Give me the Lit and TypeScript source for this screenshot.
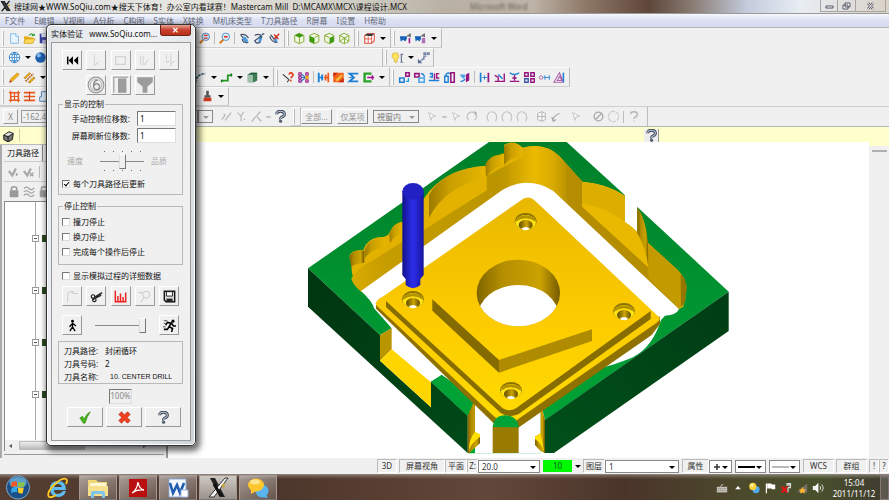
import { LitElement, html, css, svg, nothing } from "lit";
import { customElement, property } from "lit/decorators.js";

const glyphs: Record<string, unknown> = {
  app: svg`<path d="M2 2l3 0 6 10h-3zM11 1L7 6M6 8L2 13" stroke="#222" stroke-width="1.6" fill="#444"/><path d="M9 5l3 1-2 2z" fill="#c9a227"/>`,
  page: svg`<path d="M3 2h6l3 3v8H3z" fill="#e6f4ff" stroke="#7fb4dc"/><path d="M9 2v3h3" fill="#fff" stroke="#7fb4dc"/>`,
  open: svg`<path d="M1 5h5l1 1h5v7H2z" fill="#e8b320"/><path d="M3 8h11l-3 5H1z" fill="#ffd95a" stroke="#c08a00" stroke-width=".6"/><path d="M7 4q3-4 5 0M10 4h3V2" fill="none" stroke="#2f9e2f" stroke-width="1.4"/>`,
  save: svg`<path d="M2 2h11v11H2z" fill="#3a3f9c"/><path d="M4 2h7v4H4z" fill="#dfe6f5"/><path d="M5 9h5v4H5z" fill="#b8bde0"/>`,
  zoomFit: svg`<path d="M2 13l4-4" stroke="#d87a1d" stroke-width="2.4"/><circle cx="9" cy="5.500" r="4.300" fill="#bfe3f7" stroke="#4a77a8"/><path d="M7 4h4M7 7h4" stroke="#e02818" stroke-width="1.500"/>`,
  zoomOut: svg`<path d="M2 13l4-4" stroke="#d87a1d" stroke-width="2.4"/><circle cx="9" cy="5.500" r="4.300" fill="#d6ecf9" stroke="#4a88c0"/><path d="M7 5.500h4" stroke="#e02818" stroke-width="1.800"/>`,
  spin: svg`<path d="M3 3l7 9M3 3q6-1 9 4M5 8q0 5 7 4" stroke="#43536b" stroke-width="1.500" fill="none"/><path d="M8 5l4 5-3 2-4-4z" fill="#4b9be0"/>`,
  turn: svg`<path d="M2 4q5-3 8 1l-2 7q-5 2-6-2l7-5M10 3l3-1" stroke="#43536b" stroke-width="1.500" fill="none"/><path d="M7 7l4-1-2 5-3 1z" fill="#4b9be0"/>`,
  unspin: svg`<path d="M3 3l7 9M2 5q2 7 9 7" stroke="#43536b" stroke-width="1.500" fill="none"/><path d="M7 8l3-1 1 5-3-1z" fill="#4b9be0"/><path d="M7 3l5 5M13 2L7 8" stroke="#d42a1c" stroke-width="1.600"/>`,
  cubeTop: svg`<path d="M2 4l5-2.500L12.500 4v7L7.500 13.500 2 11z" fill="#f3f8e4" stroke="#79a51d"/><path d="M2 4l5-2.500L12.500 4 7.500 6.500z" fill="#3f9a13"/><path d="M7.500 6v7" stroke="#79a51d"/>`,
  cubeFront: svg`<path d="M2 4l5-2.500L12.500 4v7L7.500 13.500 2 11z" fill="#f3f8e4" stroke="#79a51d"/><path d="M2 4.500l5.500 2.500v6.500L2 11z" fill="#3f9a13"/><path d="M7.500 6.500l5-2.500" stroke="#79a51d"/>`,
  cubeSide: svg`<path d="M2 4l5-2.500L12.500 4v7L7.500 13.500 2 11z" fill="#f3f8e4" stroke="#79a51d"/><path d="M12.500 4.500L7.500 7v6.500l5-2.500z" fill="#3f9a13"/><path d="M2 4l5.500 2.500" stroke="#79a51d"/>`,
  cubeIso: svg`<path d="M2 4l5-2.500L12.500 4v7L7.500 13.500 2 11zM2 4l5.500 3 5-3M7.500 7v6M2 11l5.500-4 5 4" fill="#f6faea" stroke="#79a51d"/>`,
  cubeRed: svg`<path d="M2 4l3-2h8v8l-3 3H2z" fill="#fff" stroke="#e04a3a" stroke-width="1.200"/><path d="M2 4l3-2h8l-3 3z" fill="#333"/><path d="M2 8h8M6 5v8M10 5v8" stroke="#e04a3a"/>`,
  vis: svg`<path d="M1 5h8v3L7 11 5 9l-3 2z" fill="#1660b8"/><path d="M9 5l4-3v4" stroke="#555" fill="#888"/><path d="M12 7v6" stroke="#a0148c" stroke-width="1.800"/>`,
  vis2: svg`<path d="M1 5h7v3L6 11 4 9l-2 2z" fill="#1660b8"/><path d="M8 5l4-3v4" stroke="#555" fill="#888"/><path d="M9 7h4v6H9z" fill="#b070b8"/>`,
  globe: svg`<circle cx="7.500" cy="7.500" r="6" fill="#eef7ff" stroke="#2b7cc4"/><path d="M1.500 7.500h12M7.500 1.500v12M3 4h9M3 11h9M7.500 1.500q-6 6 0 12q6-6 0-12" fill="none" stroke="#2b7cc4" stroke-width=".8"/>`,
  ball: svg`<circle cx="7.500" cy="7.500" r="6" fill="#1d5fae"/><circle cx="5.500" cy="5" r="2.500" fill="#7db7ee"/>`,
  bulb: svg`<path d="M5 2a4 4 0 014 4q0 2-2 4v3H4v-3Q1 8 1 6a4 4 0 014-4z" fill="#ffe15a" stroke="#c9a63a" stroke-width=".7"/><path d="M12 4v9M11 4h3M11 13h3" stroke="#6c7a92" stroke-width="1.400"/>`,
  jog: svg`<path d="M8 2h2v2H8zM12 2h2v2h-2zM11 6H8v4M3 13l5-5" fill="none" stroke="#6f7fa3" stroke-width="1.400"/><path d="M1 14V9l5 5z" fill="#5f6f93"/>`,
  pencil: svg`<path d="M2 13l1-4 8-7 2 2-8 8z" fill="#f0b31c" stroke="#b57908" stroke-width=".6"/><path d="M1.500 13.500l1-3 2 2z" fill="#a33"/>`,
  pencils: svg`<path d="M1 8l6-6 2 1-6 6zM6 13l6-6 2 1-6 6z" fill="#f0b31c" stroke="#a86c08" stroke-width=".7"/><path d="M3 12l9-9" stroke="#b3541a" stroke-width="1.800" stroke-dasharray="2 1"/>`,
  arc: svg`<path d="M2 13q0-9 11-10" fill="none" stroke="#24566e" stroke-width="1.800" stroke-dasharray="3 1"/>`,
  spline: svg`<path d="M2 11h7V5h5" fill="none" stroke="#23971f" stroke-width="2"/><path d="M1 10h2v3H1zM12 3h2v3h-2z" fill="#157a12"/>`,
  solid: svg`<path d="M2 4l4-2h7v9l-4 2H2z" fill="#3d7a55"/><path d="M2 4h6v9H2z" fill="#9fbfa9"/><path d="M2 4l4-2h7L9 4z" fill="#1f5a3a"/>`,
  ask: svg`<path d="M1 4l7 6-2 3" fill="none" stroke="#333" stroke-width="1.200"/><path d="M8 4q2-3 4-1t-2 5M10 10v2" fill="none" stroke="#e23c17" stroke-width="2"/>`,
  nodes: svg`<path d="M2 2h3v3H2zM2 6h3v3H2zM2 10h3v3H2zM10 2h3v3h-3zM10 10h3v3h-3z" fill="#d58ac8" stroke="#96147e"/><path d="M5 3.500l5 4M5 11.500l5-4M5 7.500h5" stroke="#2e76c8" stroke-width="1.300"/><path d="M9.500 5.500h4v4h-4z" fill="#f0a51e"/>`,
  join: svg`<path d="M2 2v11M6 4v7" stroke="#1c7fd6" stroke-width="2.200"/><path d="M2 7.500h5" stroke="#1c7fd6" stroke-width="2"/><path d="M8 7.500h5M13 2v11M10 4v7" stroke="#f0571a" stroke-width="2"/>`,
  brush: svg`<path d="M1.500 2h12v11h-12z" fill="#f0631a"/><path d="M1.500 2h5l-5 5zM13.500 8v5h-6z" fill="#c62812"/><path d="M4 10l7-6 1 2-6 6z" fill="#ffc23c"/>`,
  sigma: svg`<path d="M13 3H3l5 4.500L3 12h10" fill="none" stroke="#1c7fd6" stroke-width="2.200"/><path d="M2 7.500h5" stroke="#1c7fd6"/>`,
  magnet: svg`<path d="M11 3H3v9h8" fill="none" stroke="#29a329" stroke-width="2.800"/><path d="M6 7.500h8M12 5v5" stroke="#a2148c" stroke-width="1.800"/>`,
  x1: svg`<path d="M2 8h5v5H2z" fill="none" stroke="#1c7fd6" stroke-width="1.800"/><path d="M9 2h4v4H9z" fill="none" stroke="#96147e" stroke-width="1.800"/><path d="M9 12h3V8" fill="none" stroke="#1c9fe6" stroke-width="1.500"/>`,
  x2: svg`<path d="M2 3h5v4H2z" fill="none" stroke="#96147e" stroke-width="1.800"/><path d="M7 8h6v5H7z" fill="none" stroke="#4ba4e6" stroke-width="1.800"/><path d="M9 3q4 0 4 4" fill="none" stroke="#1c7fd6" stroke-width="1.500"/>`,
  x3: svg`<path d="M2 3h3v4H2M1 11h12" fill="none" stroke="#1c7fd6" stroke-width="1.800"/><path d="M13 3h-3v5h3M7.500 3v7" fill="none" stroke="#96147e" stroke-width="1.600"/>`,
  x4: svg`<path d="M2 6h4v7H2zM3 5q2-4 5-2" fill="none" stroke="#1c7fd6" stroke-width="1.600"/><path d="M9 2h4v11H9z" fill="none" stroke="#96147e" stroke-width="1.800"/>`,
  x5: svg`<path d="M2 4h6v3L6 9 4 7z" fill="#4ba4e6"/><path d="M9 4l4-2v9l-4 2z" fill="#96147e"/><path d="M3 12q4 0 5-3" fill="none" stroke="#1c7fd6" stroke-width="1.400"/>`,
  d1: svg`<path d="M3 2v11" stroke="#1c7fd6" stroke-width="2"/><path d="M12 2v11" stroke="#96147e" stroke-width="2"/><path d="M5 7.500h6M7.500 5v5" stroke="#1c7fd6"/>`,
  d2: svg`<path d="M2 5l4 2v5M2 12h11V3" fill="none" stroke="#96147e" stroke-width="1.600"/><path d="M6 4l5 5" stroke="#1c7fd6" stroke-width="1.600"/>`,
  d3: svg`<path d="M2 2q5 4 11 0" fill="none" stroke="#1c7fd6" stroke-width="1.600"/><path d="M2 12h11M7.500 5v6M5 8h5" stroke="#96147e" stroke-width="1.600"/>`,
  d4: svg`<path d="M2 2h4v4H2zM9 2h4v4H9zM9 9h4v4H9z" fill="none" stroke="#96147e" stroke-width="1.600"/><path d="M2 9h4v4H2z" fill="none" stroke="#3d58a8" stroke-width="1.600"/>`,
  d5: svg`<circle cx="3.500" cy="7.500" r="2" fill="none" stroke="#b060a8"/><path d="M6 7.500h8M8 5v5M13 5v5" stroke="#3c90d8" stroke-width="1.200"/>`,
  d6: svg`<path d="M1 13L7.500 2 12 13zM5 11l3-5 2 5z" fill="none" stroke="#b060a8" stroke-width="1.200"/><path d="M12 2v11" stroke="#1c7fd6" stroke-width="1.800"/>`,
  gridRed: svg`<path d="M3 3h9v9H3z" fill="none" stroke="#e04818" stroke-width="1.600"/><path d="M3 1v13M12 1v13M1 3h13M1 12h13M7.500 3v9M3 7.500h9" stroke="#e8581c" stroke-width="1.400"/>`,
  rows: svg`<path d="M1 3h13M1 7.500h13M1 12h13" stroke="#e8581c" stroke-width="2"/><path d="M7.500 2v11" stroke="#d63a10" stroke-width="1.200"/>`,
  doc: svg`<path d="M4 2h9v11H2V8h2z" fill="#dfeefa" stroke="#4272a5"/>`,
  stamp: svg`<path d="M6 1h3v5h2v3H4V6h2z" fill="#555"/><path d="M3 9h9v4H3z" fill="#d1371c"/>`,
  pick: svg`<path d="M3 3l8 4-4 1-1 4z" fill="#fafafa" stroke="#c0c0c0"/>`,
  lines: svg`<path d="M2 11l4-5M6 12l4-6M9 8l4-5M4 5h2" stroke="#b5b5b5" stroke-width="1.300"/>`,
  why: svg`<path d="M3 3l4 4 3-5M7 7v6M10 11h2" stroke="#b8b8b8" fill="none" stroke-width="1.300"/>`,
  slash: svg`<path d="M2 13L12 2M8 8l5 5" stroke="#b0b0b0" fill="none" stroke-width="1.300"/>`,
  dash: svg`<path d="M5 8h5" stroke="#b0b0b0" stroke-width="1.600"/>`,
  loop: svg`<path d="M4 12Q1 7 4 4t8 0q3 4-1 8" fill="none" stroke="#c4c4c4" stroke-width="1.400"/><path d="M10 2l3 1-1 3" fill="none" stroke="#999"/>`,
  arch: svg`<path d="M4 13Q1 8 4 4t8 0q3 4 0 9" fill="none" stroke="#c4c4c4" stroke-width="1.400"/>`,
  box: svg`<path d="M3 4l5-2 4 2v7l-4 2-5-2zM8 2v11M3 7.500h9" fill="#f6f6f6" stroke="#b0b0b0"/>`,
  check: svg`<path d="M3 12Q5 6 11 4" fill="none" stroke="#b5b5b5" stroke-width="1.500"/><path d="M2 8l2 5 3-2" fill="none" stroke="#aaa" stroke-width="1.500"/>`,
  ban: svg`<circle cx="7.500" cy="7.500" r="5" fill="none" stroke="#aaa" stroke-width="1.600"/><path d="M4 11l7-7" stroke="#aaa" stroke-width="1.600"/>`,
  ring: svg`<circle cx="7.500" cy="7.500" r="6" fill="none" stroke="#ccc" stroke-width="1.400" stroke-dasharray="5 1"/>`,
  helpDim: svg`<path d="M4 5q0-3 4-3t4 3-4 4v1M8 12v1" fill="none" stroke="#b5b5b5" stroke-width="1.600"/>`,
  help: svg`<path d="M3 5q0-3.500 4.500-3.500T12 5q0 2-2.500 3T8 10.500" fill="none" stroke="#3c4658" stroke-width="3.400"/><path d="M3 5q0-3.500 4.500-3.500T12 5q0 2-2.500 3T8 10.500" fill="none" stroke="#b9c3d3" stroke-width="1.300"/><circle cx="7.600" cy="13" r="1.500" fill="#59647a" stroke="#2c3444" stroke-width=".6"/>`,
  block: svg`<path d="M2 6l6-4 5 2-1 7-5 3-5-3z" fill="#777" stroke="#111"/><path d="M2 6l5 2 6-4M7 8v6" fill="none" stroke="#111"/><path d="M3 5.500L8 3l4 1-5 3z" fill="#ddd"/>`,
  tick: svg`<path d="M1 7l4 5 4-8" fill="none" stroke="#a8a8a8" stroke-width="2.600"/><path d="M9 9l3 2-3 2z" fill="#a0a0a0"/>`,
  tickx: svg`<path d="M1 7l4 5 4-8" fill="none" stroke="#a8a8a8" stroke-width="2.600"/><path d="M8 9l4 4M12 9l-4 4" stroke="#a0a0a0" stroke-width="1.400"/>`,
  lock: svg`<rect x="2" y="6" width="10" height="8" rx="1" fill="#9a9a9a"/><path d="M4 7V4q0-2 3-2t3 2v3" fill="none" stroke="#9a9a9a" stroke-width="1.800"/>`,
  waves: svg`<path d="M1 4q3-3 6 0t6-1M1 8q3-3 6 0t6-1M1 12q3-3 6 0t6-1" fill="none" stroke="#a0a0a0" stroke-width="1.400"/>`,
  rewind: svg`<path d="M2 3v9" stroke="#000" stroke-width="1.800"/><path d="M8 2.500v10L3 7.500zM14 2.500v10L9 7.500z"/>`,
  play: svg`<path d="M5 1v13" stroke="#ccc"/><path d="M6 13l4-4" stroke="#bbb"/>`,
  stop: svg`<path d="M2 3h11v9H2z" fill="none" stroke="#d2d2d2" stroke-width="1.500"/>`,
  step: svg`<path d="M3 2v11M6 2v11" stroke="#ccc"/><path d="M7 13l5-7" stroke="#ccc"/>`,
  fast: svg`<path d="M4 1v9M9 1v13" stroke="#ccc"/><path d="M5 10l2-2M10 11l3-3" stroke="#bbb"/>`,
  coil: svg`<circle cx="7.500" cy="7.500" r="6.500" fill="none" stroke="#999"/><circle cx="7.500" cy="7.500" r="4.800" fill="none" stroke="#aaa" stroke-width=".7"/><path d="M9 3.500q-3.500 0-3.500 4.500 0 3.500 2.500 3.500t2.500-2.500-2.500-2.500-2 2" fill="none" stroke="#909090" stroke-width="1.200"/>`,
  mill: svg`<path d="M1.500 14V1h12" fill="none" stroke="#a0a0a0"/><path d="M5 2h7v12H5z" fill="#9c9c9c"/>`,
  funnel: svg`<path d="M1 1h13v4L9.500 9v5h-4V9L1 5z" fill="#9c9c9c"/>`,
  folder: svg`<path d="M2 4v10M2 4l3-2h3v2h6M6 2h3" fill="none" stroke="#c4c4c4"/>`,
  cut: svg`<path d="M14 3L6 8M13 6L3 11" stroke="#222" stroke-width="1.600"/><circle cx="3.500" cy="7.500" r="2" fill="none" stroke="#222" stroke-width="1.400"/><circle cx="5" cy="11.500" r="2" fill="none" stroke="#222" stroke-width="1.400"/>`,
  chart: svg`<path d="M1.500 1v12.500h12V3M4.500 7v6M7.500 4v9M10.500 8v5" fill="none" stroke="#ee2020" stroke-width="1.700"/>`,
  lens: svg`<circle cx="9.500" cy="5.500" r="4" fill="none" stroke="#c4c4c4"/><path d="M7 9l-4 5M1 3h4" stroke="#bbb"/>`,
  disk: svg`<path d="M1.500 1.500h12v12h-10l-2-2z" fill="#d8d8d8" stroke="#111" stroke-width="1.600"/><path d="M4 2h7v5H4z" fill="#fff" stroke="#111"/><path d="M4 10h7v4H4z" fill="#222"/>`,
  walk: svg`<circle cx="7.500" cy="2.500" r="1.600"/><path d="M7.500 4v5l-3 5M7.500 9l3 5M7.500 5L4 9M7.500 5l4 3" fill="none" stroke="#000" stroke-width="1.500"/>`,
  run: svg`<circle cx="11.500" cy="2.500" r="1.800"/><path d="M10 4L7 9l4 2-1 4M7 9l-2 3H1M10 5L5 4 3 7M10 5l2 3h3" fill="none" stroke="#000" stroke-width="1.800"/><path d="M1 2h4M0 9h3M1 5h2" stroke="#333"/>`,
  ok: svg`<path d="M1 8l3-2 2 3q3-6 7-8-4 6-6 13H5z" fill="#48b81c" stroke="#2c7f0e" stroke-width=".7"/>`,
  cancel: svg`<path d="M1 4l3-3 3.500 3.500L11 1l3 3-3.500 3.500L14 11l-3 3-3.500-3.500L4 14l-3-3 3.500-3.500z" fill="#f4401c" stroke="#a81f08" stroke-width=".8"/>`,
  // tray
  kbd: svg`<path d="M1 6h13v7H1z" fill="#c9c4c0"/><path d="M2 8h11M2 10.500h11" stroke="#776" stroke-dasharray="1.500 1"/><path d="M6 6q0-3 3-3" fill="none" stroke="#ddd"/>`,
  up: svg`<path d="M4 9l3.500-4L11 9z" fill="#fff"/>`,
  chat: svg`<circle cx="10" cy="9.500" r="4.500" fill="#4fa9ea"/><circle cx="6" cy="5.500" r="4.500" fill="#ffcf3a"/><circle cx="5" cy="4" r="2" fill="#fff0a8"/>`,
  flag: svg`<path d="M3 2v12" stroke="#fff" stroke-width="1.500"/><path d="M4 2h5l1 1h4v6h-4L9 8H4z" fill="#fff"/>`,
  plug: svg`<path d="M8 2h5v5h-3v6M8 4h6" fill="none" stroke="#ddd" stroke-width="1.500"/><path d="M2 6l7 7M9 6l-7 7" stroke="#e31515" stroke-width="2.600"/>`,
  bars: svg`<path d="M1 13L14 2v11z" fill="#77706c"/><path d="M8 6l1.500 3 3 .5-2 2 .5 3-3-1.500-3 1.500.500-3-2-2 3-.5z" fill="#ffb52c"/>`,
  sound: svg`<path d="M1 5h3l4-4v13l-4-4H1z" fill="#f4f4f4"/><path d="M10 5q2 2.500 0 5M12 3q4 4.500 0 9" fill="none" stroke="#ddd" stroke-width="1.200"/>`,
};

@customElement("tool-icon")
class ToolIcon extends LitElement {
  @property() name = "";
  static styles = css`
    :host { display: inline-flex; width: 13px; height: 13px; flex: none; }
    svg { width: 100%; height: 100%; display: block; }
  `;
  render() {
    return html`<svg viewBox="0 0 15 15" aria-hidden="true">${glyphs[this.name] ?? nothing}</svg>`;
  }
}

@customElement("part-view")
class PartView extends LitElement {
  static styles = css`
    :host { display: block; }
    svg { display: block; width: 100%; height: 316px; }
  `;
  hole(x: number, y: number) {
    return svg`<g transform="translate(${x} ${y})">
      <ellipse rx="33" ry="25" fill="#8a7000"/>
      <ellipse cy="3" rx="31" ry="22" fill="#ffe413"/>
      <path d="M-31 2a31 20 0 0162 0q-31-22-62 0z" fill="#b39200"/>
      <ellipse cy="11" rx="21" ry="15" fill="url(#bore)"/>
      <path d="M-13 22q13-10 26 0-13 9-26 0z" fill="#fff"/>
    </g>`;
  }
  render() {
    return html`<svg viewBox="168 142 701 316" preserveAspectRatio="xMidYMin meet" role="img" aria-label="Mastercam">
      <defs>
        <linearGradient id="top" x1="0" y1="0" x2="0" y2="1"><stop offset="0" stop-color="#007f2a"/><stop offset="1" stop-color="#00a838"/></linearGradient>
        <linearGradient id="left" x1="0" y1="0" x2="1" y2="1"><stop offset="0" stop-color="#003510"/><stop offset="1" stop-color="#004a18"/></linearGradient>
        <linearGradient id="right" x1="1" y1="0" x2="0" y2="1"><stop offset="0" stop-color="#003d14"/><stop offset="1" stop-color="#00501a"/></linearGradient>
        <linearGradient id="plate" x1="0" y1="0" x2="0" y2="1"><stop offset="0" stop-color="#e8b800"/><stop offset=".5" stop-color="#fcca00"/><stop offset="1" stop-color="#ffdb00"/></linearGradient>
        <linearGradient id="strip" x1="0" y1="0" x2="1" y2="0"><stop offset="0" stop-color="#d9ac00"/><stop offset=".2" stop-color="#c69d00"/><stop offset=".85" stop-color="#bb9500"/><stop offset="1" stop-color="#c9a000"/></linearGradient>
        <linearGradient id="curve" x1="0" y1="0" x2="1" y2="0"><stop offset="0" stop-color="#9c7a00"/><stop offset=".35" stop-color="#c99e00"/><stop offset="1" stop-color="#e6b600"/></linearGradient>
        <linearGradient id="corner" x1="0" y1="0" x2="1" y2="0"><stop offset="0" stop-color="#c69d00"/><stop offset=".35" stop-color="#ebba00"/><stop offset=".6" stop-color="#d9ab00"/><stop offset=".85" stop-color="#b08b00"/><stop offset="1" stop-color="#b08b00"/></linearGradient>
        <linearGradient id="round" x1="0" y1="0" x2="1" y2="0"><stop offset="0" stop-color="#7d6200"/><stop offset=".3" stop-color="#b28d00"/><stop offset=".75" stop-color="#cca200"/><stop offset="1" stop-color="#6d5500"/></linearGradient>
        <linearGradient id="bore" x1="0" y1="0" x2="1" y2="0"><stop offset="0" stop-color="#5b4900"/><stop offset=".55" stop-color="#cda500"/><stop offset="1" stop-color="#5b4900"/></linearGradient>
        <linearGradient id="tool" x1="0" y1="0" x2="1" y2="0"><stop offset="0" stop-color="#12128c"/><stop offset=".5" stop-color="#2e2eec"/><stop offset="1" stop-color="#15159c"/></linearGradient>
        <clipPath id="bigHole"><ellipse cx="655" cy="474" rx="125" ry="100"/></clipPath>
      </defs>
      <g transform="translate(300 135) scale(.33333)">
        <path d="M24 400L567 21H800L975 181V300H1012V216L1286 470 735 856 722 803V955H503V842L393 740 275 580 240 600z" fill="url(#top)"/>
        <path d="M24 400L240 600V677L393 817V740L503 842V954L24 515z" fill="url(#left)"/>
        <path d="M1286 470V588L762 954H733L735 855z" fill="url(#right)"/>
        <path d="M148 365Q150 345 190 345 200 313 235 307 265 307 270 290 280 265 307 260L372 190Q430 100 560 92 560 70 612 55L612 30Q640 12 668 38 735 20 780 65L847 140Q920 145 975 183V260L1012 294V216L1045 325 1130 402Q1170 440 1155 480L1150 515 1137 522 760 180Q690 140 607 175L183 468Q155 445 154 390z" fill="#e3b200"/>
        <path d="M387 248V180Q430 100 560 93V130Q440 150 387 248z" fill="url(#curve)"/>
        <path d="M148 365Q160 340 193 348V383Q165 385 154 395z" fill="url(#round)"/>
        <path d="M193 348Q205 305 255 310V335Q215 340 195 370z" fill="url(#curve)"/>
        <path d="M268 300Q275 266 307 260V298Q285 298 270 325z" fill="url(#curve)"/>
        <path d="M154 430Q175 395 215 378L305 322 375 283 560 166V122L640 80H672V160L607 175 183 470Q158 450 154 430z" fill="url(#strip)"/>
        <path d="M625 90L640 80Q670 70 668 38 735 20 780 65L847 140V250L760 190H625z" fill="url(#corner)"/>
        <path d="M556 87Q575 55 612 60V90Q580 98 558 125z" fill="url(#curve)"/>
        <path d="M612 34Q640 12 668 38V68Q635 62 612 90z" fill="url(#curve)"/>
        <path d="M800 88L847 140V215L1045 395 1145 500 1137 522 800 215z" fill="#b48e00"/>
        <path d="M847 140Q930 150 975 183V262Q1045 300 1045 397L847 215z" fill="#e6b500"/>
        <path d="M847 143Q920 145 975 183V258L910 225 847 215z" fill="#dcae00"/>
        <path d="M847 215L847 206Q920 215 975 262 1045 315 1045 397z" fill="#e9b800"/>
        <path d="M1012 216Q1050 270 1045 397 1038 340 1012 294z" fill="url(#round)"/>
        <path d="M1045 325L1130 402Q1168 440 1156 480 1160 505 1137 520L1045 430z" fill="#c39a00"/>
        <path d="M1142 416Q1168 440 1156 480 1158 505 1143 515z" fill="#967600"/>
        <path d="M183 468L607 165Q685 120 760 168L1137 522Q1130 540 1095 542L1083 555Q1058 635 1000 666 955 687 860 710L845 724 800 745 790 765 760 785 722 805 722 955H525V790L425 720 393 740 275 640V580L240 540 222 520Q218 500 183 468z" fill="#fff"/>
        <path d="M240 600L275 580V643L240 677z" fill="#b99600"/>
        <path d="M240 677L275 643 393 742V817z" fill="#ffd500"/>
        <path d="M393 740L425 720 525 790 503 842z" fill="#00a236"/>
        <path d="M503 842L525 792V895L540 905V925L508 954H503z" fill="url(#round)"/>
        <path d="M525 890L540 898V906Q510 925 507 950 505 915 525 890z" fill="#ffe000"/>
        <path d="M722 803L735 856V954Q720 950 705 930V905L722 895z" fill="url(#round)"/>
        <path d="M705 905L722 895 733 954Q725 925 705 912z" fill="#ffe000"/>
        <path d="M228 505L240 490 1080 545V567L1055 600 655 878 620 885 578 862 228 521z" fill="#8e7100"/>
        <path d="M228 503Q230 495 250 484L660 198Q685 178 705 197L1076 545Q1085 552 1070 563L655 852Q620 880 580 842L228 510z" fill="url(#plate)"/>
        <path d="M258 498L608 820Q628 832 648 820L1052 528V552L655 838Q625 850 602 834L258 516z" fill="#876c00"/>
        <path d="M397 493V527L597 713V675z" fill="#856a00"/>
        <path d="M597 675L876 583V618L597 713z" fill="#ae8b00"/>
        <g clip-path="url(#bigHole)">
          <rect x="525" y="370" width="260" height="210" fill="url(#round)"/>
          <ellipse cx="655" cy="548" rx="123" ry="98" fill="#fff"/>
        </g>
        ${this.hole(339, 493)}${this.hole(677, 259)}${this.hole(972, 529)}${this.hole(633, 766)}
        <path d="M578 876H656V954H578z" fill="#987b00"/>
        <path d="M578 876Q582 840 617 841 652 842 656 877z" fill="#00a338"/>
        <path d="M307 169H371V420L361 432V450Q339 470 317 450V432L307 420z" fill="url(#tool)"/>
        <ellipse cx="339" cy="169" rx="32" ry="25" fill="#2222c4"/>
      </g>
    </svg>`;
  }
}

const ic = (n: string) => html`<button class=${n === "dash" ? "tb slim" : "tb"} aria-label=${n}><tool-icon name=${n}></tool-icon></button>`;
const sep = html`<i class="sep"></i>`;
const dd = html`<button class="dd" aria-label="▾"></button>`;
const push = (n: string, label = n) => html`<button class="pb" aria-label=${label}><tool-icon name=${n}></tool-icon></button>`;
const list = (s: string) => s.split(" ").map((n) => (n === "|" ? sep : n === "v" ? dd : ic(n)));

@customElement("app-root")
class AppRoot extends LitElement {
  static styles = css`
    :host {
      display: flex; flex-direction: column; min-height: 100vh; position: relative; overflow: hidden;
      background: #f0f0f0; color: #111;
      font: 8px/12px "Noto Sans", "Noto Sans CJK SC", sans-serif;
    }
    * { box-sizing: border-box; }
    button, input, select { font: inherit; color: inherit; margin: 0; padding: 0; border-radius: 0; }
    button { display: inline-flex; align-items: center; justify-content: center; border: 0; background: none; }
    a { color: inherit; text-decoration: none; }

    .title {
      height: 14px; display: flex; align-items: center; padding-left: 0; gap: 1px; flex: none;
      background: linear-gradient(90deg, #d9dcdf 0, #e8e6e0 20%, #cfcdc4 40%, #b9b1a4 50%, #bdb3a6 60%, #8d7767 66%, #5e473a 73%, #8a7d74 78%, #c3cbdc 84%, #e8edf3 90%, #d9d2c8);
      border-bottom: 1px solid #9a9a9a; white-space: pre;
    }
    .ghost { margin-left: 62px; color: #6b665c; filter: blur(1px); }
    .win { margin-left: auto; display: flex; align-self: flex-start; margin-right: 3px; }
    .win button { height: 12px; width: 18px; border: 1px solid #a9a49d; border-top: 0; border-left-width: 0; color: #445; }
    .win button:first-child { border-left-width: 1px; }
    .win button:last-child { width: 30px; }
    .win svg { width: 9px; height: 8px; }

    .menu {
      height: 14px; display: flex; gap: 9px; align-items: center; padding-left: 5px; flex: none; color: #666b7b;
      background: linear-gradient(#f7f8fd, #dde2f3 45%, #d5dbef); border-bottom: 1px solid #b4b4bc;
    }

    .bars { flex: none; border-bottom: 1px solid #b5b5b5; }
    .bar { display: flex; height: 20px; }
    .bar.short { height: 19px; }
    .grp { display: flex; align-items: center; padding-right: 2px; border-right: 1px solid #bdbdbd; border-bottom: 1px solid #cfcfcf; border-top: 1px solid #fafafa; }
    .grp::before { content: ""; width: 0; height: 15px; margin: 0 3px 0 2px; border-left: 1px solid #fff; border-right: 1px solid #b8b8b8; }
    .tb { width: 15px; height: 15px; flex: none; }
    .slim { width: 9px; }
    .dd { width: 11px; height: 15px; flex: none; }
    .dd::before { content: ""; border: 3px solid transparent; border-top-color: #000; border-bottom: 0; }
    .sep { width: 1px; height: 12px; margin: 0 2px; background: #bbb; flex: none; }
    .under { display: block; flex: none; }
    .u1 { width: 145px; } .u2 { width: 332px; } .u3 { width: 145px; } .u4 { width: 148px; }

    .coord { color: #888; border-top: 1px solid #cfcfcf; margin-right: auto; }
    .sq { width: 15px; height: 15px; border: 1px solid; border-color: #fff #999 #999 #fff; color: #888; }
    .num { width: 177px; height: 13px; margin-left: 3px; border: 1px solid #999; background: #f0f0f0; padding-left: 1px; color: #888; }
    .combo { display: inline-flex; position: relative; height: 13px; border: 1px solid #888; background: #fff; flex: none; }
    .combo select { appearance: none; border: 0; background: transparent; width: 100%; padding-left: 3px; outline: 0; line-height: 11px; }
    .combo::after { content: ""; position: absolute; right: 3px; top: 5px; border: 3px solid transparent; border-top-color: #000; border-bottom: 0; pointer-events: none; }
    .combo svg { position: absolute; left: 2px; top: 1px; height: 10px; width: 18px; pointer-events: none; }
    .dim { background: #f0f0f0; width: 46px; margin-right: 6px; color: #777; }
    .dim::after { border-top-color: #999; }
    .axis { width: 15px; }
    .txt { width: 31px; height: 15px; margin-right: 5px; border: 1px solid; border-color: #fff #888 #888 #fff; color: #999; }
    .gap3 { margin-left: 3px; }
    .gap5 { margin-left: 5px; }
    .last { border-right: 1px solid #bdbdbd; padding: 0 6px 0 2px; }

    .prompt { flex: none; height: 15px; background: #ffffcc; display: flex; align-items: flex-start; }
    .prompt .tb { margin: 2px 0 0 1px; }
    .prompt hr { width: 1px; height: 14px; margin: 2px 0 0 3px; border: 0; background: #d0d0a0; }
    .prompt .q { margin: 2px 0 0 624px; height: 13px; background: #eee; border-right: 1px solid #999; }

    .main { flex: 1; display: flex; min-height: 316px; }
    .side { width: 168px; flex: none; display: flex; flex-direction: column; border-right: 2px solid #999; border-left: 2px solid #aaa; padding: 0 2px 3px 2px; }
    .side > i { display: block; height: 3px; margin: 0 -4px; background: #ffffcc; border-bottom: 1px solid #bbb; }
    .tab { align-self: flex-start; height: 16px; width: 39px; border-right: 1px solid #888; }
    .tools { display: flex; height: 20px; align-items: center; border-top: 1px solid #ccc; padding-left: 3px; flex: none; }
    .tree { flex: 1; background: #fff; border: 1px solid #888; border-bottom: 0; display: flex; }
    .tree ul { list-style: none; margin: 0 0 0 30px; padding: 31px 0 0; border-left: 1px solid #aaa; display: flex; flex-direction: column; gap: 41px; }
    .tree li { display: flex; align-items: center; height: 11px; margin-left: -4px; }
    .pm { width: 7px; height: 7px; border: 1px solid #999; background: #fff; }
    .pm::before { content: ""; width: 3px; height: 1px; background: #555; }
    .tree li::after { content: ""; width: 7px; height: 7px; margin-left: 3px; background: #2c4a22; }
    .hs { height: 11px; display: flex; align-items: center; flex: none; border-left: 1px solid #888; }
    .hs::before { content: ""; margin: 0 7px 0 4px; border: 2px solid transparent; border-right: 3px solid #555; border-left: 0; }
    .hs b { width: 66px; height: 9px; background: linear-gradient(#eee, #bbb); border: 1px solid #bbb; }
    .hs::after { content: ""; margin-left: 58px; border: 2px solid transparent; border-left: 3px solid #555; border-right: 0; }
    .side::after { content: ""; border-bottom: 1px solid #999; height: 3px; }
    .view { flex: 1; background: #fff; min-width: 0; }
    .edge { width: 20px; flex: none; background: #f0f0f0; border-top: 4px solid #ffffcc; }
    .edge::before { content: ""; display: block; height: 4px; margin: 0 2px 0 3px; border-bottom: 2px solid #b0b0b0; }

    .status { flex: none; height: 16px; display: flex; align-items: center; justify-content: flex-end; overflow: hidden; color: #333; }
    .cell { height: 14px; border: 1px solid; border-color: #bbb #fff #fff #bbb; display: flex; align-items: center; justify-content: center; white-space: nowrap; flex: none; }
    .status .combo { margin-right: 3px; }
    .w9 { width: 10px; } .w11 { width: 11px; } .w20 { width: 20px; } .w21 { width: 22px; } .w31 { width: 31px; } .w46 { width: 46px; } .w27 { width: 27px; }
    .c62 { width: 62px; } .c74 { width: 74px; } .c23 { width: 23px; } .c31 { width: 31px; }
    .lime { width: 29px; background: #00f800; height: 12px; color: #062; }
    .mr { margin-right: 2px; }

    .task {
      flex: none; height: 26px; display: flex; align-items: stretch; color: #fff;
      background: linear-gradient(rgba(255,255,255,.25), rgba(255,255,255,0) 4px), linear-gradient(90deg, #553e31, #4b352a 30%, #5a4033 45%, #62483a 55%, #4a342a 70%, #4c4a2c 84%, #48502c 92%, #403a30);
      border-top: 1px solid #8d8078;
    }
    .orb { width: 35px; } .orb svg { width: 26px; height: 25px; }
    .ie { width: 44px; } .ie svg { width: 22px; height: 22px; }
    .app { width: 38px; margin-right: 2px; border: 1px solid #a49a93; border-bottom-color: #777; background: linear-gradient(150deg, rgba(255,255,255,.5), rgba(255,255,255,.15)); }
    .app.on { background: linear-gradient(#cfc9c4, #9a918b); }
    .app svg { width: 22px; height: 22px; }
    .tray { margin-left: auto; display: flex; align-items: center; gap: 3px; }
    .tray tool-icon { width: 12px; height: 12px; margin-right: 1px; }
    .clock { width: 48px; text-align: center; line-height: 11px; margin: 0 2px 0 2px; }
    .peek { width: 9px; border: 1px solid #877; background: rgba(255,255,255,.15); }

    .dlg {
      position: absolute; left: 46px; top: 24px; width: 150px; padding: 0 4px 4px; border: 1px solid #333; border-radius: 5px;
      background: linear-gradient(100deg, #dfe3e6, #f4f6f8 40%, #cdd4d8); box-shadow: 2px 3px 6px 2px rgba(0,0,0,.6), inset 0 0 0 1px #fff;
    }
    .dlg header { display: flex; height: 17px; align-items: center; white-space: pre; }
    .x { margin-left: auto; align-self: flex-start; width: 31px; height: 11px; color: #fff; border: 1px solid #6d2318; border-top: 0; border-radius: 0 0 3px 3px; background: linear-gradient(#e6a396, #c8402c 50%, #b93218); font-weight: bold; }
    .body { height: 399px; border: 1px solid #999; background: #f0f0f0; padding: 7px 7px 0 6px; display: flex; flex-direction: column; }
    .row { display: flex; align-items: center; flex: none; }
    .btns { padding: 0 4px; justify-content: space-between; }
    .pb { width: 20px; height: 20px; border: 1px solid; border-color: #fff #999 #999 #fff; background: #f0f0f0; flex: none; }
    .pb tool-icon { width: 13px; height: 13px; }
    .mid { padding: 0 28px; justify-content: space-between; margin: 5px 0 4px; }
    .mid .pb tool-icon { width: 18px; height: 18px; }
    fieldset { margin: 0; padding: 0 0 0 3px; border: 1px solid #b8b8b8; min-width: 0; flex: none; }
    legend { padding: 0 1px; line-height: 10px; margin-left: 1px; }
    .disp { height: 96px; padding-top: 1px; }
    .halt { height: 64px; margin-top: 6px; padding-top: 3px; }
    .field { height: 17px; justify-content: flex-end; gap: 7px; padding-right: 6px; }
    .field input { width: 39px; height: 15px; border: 1px solid; border-color: #777 #ddd #ddd #777; padding-left: 2px; background: #fff; }
    .speed { height: 32px; padding: 2px 0 0 5px; color: #aaa; }
    input[type="range"] { appearance: none; background: linear-gradient(#888, #888) center / 100% 1px no-repeat; height: 18px; outline: 0; }
    input[type="range"]::-webkit-slider-thumb { appearance: none; width: 7px; height: 15px; background: #f0f0f0; border: 1px solid; border-color: #fff #777 #777 #ddd; }
    .ticks { width: 44px; margin: 0 7px 0 17px; padding: 2px 0; background: repeating-linear-gradient(90deg, transparent 0 4px, #666 4px 5px, transparent 5px 9px) top / 100% 1px no-repeat, repeating-linear-gradient(90deg, transparent 0 4px, #666 4px 5px, transparent 5px 9px) bottom / 100% 1px no-repeat; display: flex; }
    .ticks input { width: 44px; height: 16px; }
    .chk { display: flex; align-items: center; gap: 3px; height: 15px; flex: none; }
    .chk input { appearance: none; width: 8px; height: 8px; border: 1px solid; border-color: #777 #ddd #ddd #777; background: #fff; display: grid; place-items: center; }
    .chk input:checked::before { content: ""; width: 5px; height: 3px; border: solid #000; border-width: 0 0 1px 1px; transform: rotate(-50deg); box-sizing: border-box; }
    .detail { margin: 3px 0 3px 4px; }
    .walk { margin: 9px 0 6px; }
    .walk input { width: 51px; }
    .info { height: 43px; border: 1px solid #b8b8b8; padding: 2px 5px; margin: 0; display: grid; grid-template-columns: 41px 1fr; grid-auto-rows: 13px; align-items: center; flex: none; }
    .info dd { margin: 0; white-space: pre; }
    .en { font-family: "Liberation Sans", sans-serif; font-size: 7px; padding-left: 5px; }
    .pct { width: 23px; height: 15px; margin: 5px auto 3px; border: 1px solid; border-color: #777 #ddd #ddd #777; color: #888; text-align: center; display: block; flex: none; }
    .end { padding: 0 2px 0 9px; justify-content: space-between; }
    .end .pb { width: 36px; }
  `;

  render() {
    return html`
      <div class="title"><tool-icon name="app"></tool-icon><span>搜球网★WWW.SoQiu.com★搜天下体育！办公室内看球赛！Mastercam Mill  D:\\MCAMX\\MCX\\课程设计.MCX</span><span class="ghost">Microsoft Word</span>
        <div class="win">
          <button aria-label="–"><svg viewBox="0 0 9 8"><path d="M1 4h7v2H1z" fill="#fff" stroke="#556"/></svg></button>
          <button aria-label="❐"><svg viewBox="0 0 9 8"><path d="M3 1h5v4H3zM1 3h5v4H1z" fill="#fff" stroke="#556"/></svg></button>
          <button aria-label="✕"><svg viewBox="0 0 9 8"><path d="M2 1l5 6M7 1L2 7" stroke="#556" stroke-width="2.400"/><path d="M2 1l5 6M7 1L2 7" stroke="#fff"/></svg></button>
        </div>
      </div>
      <nav class="menu">${["F文件", "E编辑", "V视图", "A分析", "C构图", "S实体", "X转换", "M机床类型", "T刀具路径", "R屏幕", "I设置", "H帮助"].map((m) => html`<a href="#">${m}</a>`)}</nav>
      <div class="bars">
        <div class="bar">
          <div class="grp">${list("page open save")}<span class="under u1"></span>${list("zoomFit | zoomOut | spin turn unspin")}</div>
          <div class="grp">${list("cubeTop cubeFront cubeSide cubeIso")}</div>
          <div class="grp">${list("cubeRed v")}</div>
          <div class="grp">${list("vis vis2 v")}</div>
        </div>
        <div class="bar short">
          <div class="grp">${list("globe v ball")}<span class="under u2"></span></div>
          <div class="grp">${list("bulb v jog")}</div>
        </div>
        <div class="bar">
          <div class="grp">${list("pencil pencils v")}<span class="under u3"></span>${list("arc v spline v solid v")}</div>
          <div class="grp">${list("ask nodes | join brush sigma magnet v")}</div>
          <div class="grp">${list("x1 x2 x3 x4 x5 | d1 d2 d3 d4 d5 d6")}</div>
        </div>
        <div class="bar short">
          <div class="grp">${list("gridRed rows doc")}<span class="under u4"></span>${list("stamp v")}</div>
        </div>
        <div class="bar coord">
          <div class="row"><button class="sq gap3">X</button><input class="num" aria-label="X" value="-162.44" /><span class="combo dim axis"><select aria-label="X"></select></span>${list("lines why slash dash help")}</div>
          <div class="grp gap3"></div>
          <div class="row"><button class="txt">全部...</button><button class="txt">仅某项</button><span class="combo dim"><select aria-label="视窗内"><option>視窗内</option></select></span>${list("pick dash pick loop")}</div>
          <div class="row gap5">${list("arch arch arch")}</div>
          <div class="row gap5">${list("box check")}</div>
          <div class="row gap5">${list("pick")}</div>
          <div class="row gap5 last">${list("ban ring | helpDim")}</div>
        </div>
      </div>
      <div class="prompt">${ic("block")}<hr /><button class="tb q" aria-label="?"><tool-icon name="help"></tool-icon></button></div>
      <div class="main">
        <aside class="side">
          <i></i>
          <button class="tab">刀具路径</button>
          <div class="tools">${list("tick tickx |")}</div>
          <div class="tools">${list("lock waves lock")}</div>
          <div class="tree"><ul>${[1, 2, 3, 4].map(() => html`<li><button class="pm" aria-label="−"></button></li>`)}</ul></div>
          <div class="hs"><b></b></div>
        </aside>
        <part-view class="view"></part-view>
        <div class="edge"></div>
      </div>
      <div class="status">
        <span class="cell w20 mr">3D</span><span class="cell w46">屏幕视角</span><span class="cell w21">平面</span><span class="cell w11">Z:</span>
        <span class="combo c62"><select aria-label="Z"><option>20.0</option></select></span>
        <button class="lime">10</button><button class="dd" aria-label="10"></button>
        <span class="cell w21">图层</span><span class="combo c74"><select aria-label="图层"><option>1</option></select></span>
        <span class="cell w27">属性</span>
        <span class="combo c23"><select aria-label="✶"></select><svg viewBox="0 0 18 10"><path d="M2 5h6M5 2v6" stroke="#333" stroke-width="1.500"/></svg></span>
        <span class="combo c31"><select aria-label="━"></select><svg viewBox="0 0 18 10"><path d="M0 5h17" stroke="#000" stroke-width="2"/></svg></span>
        <span class="combo c31"><select aria-label="─"></select><svg viewBox="0 0 18 10"><path d="M0 5h17" stroke="#777"/></svg></span>
        <span class="cell w31 mr">WCS</span><span class="cell w31 mr">群组</span><span class="cell w9">!</span><span class="cell w9">?</span>
      </div>
      <div class="task">
        <button class="orb" aria-label="Windows"><svg viewBox="0 0 26 26"><circle cx="13" cy="13" r="12" fill="#1c4f86" stroke="#7fa9c9"/><ellipse cx="13" cy="8" rx="9" ry="6" fill="#5f9dcb"/><path d="M6 8q3-2 6-1v5q-3-1-6 1z" fill="#ef5a28"/><path d="M13 7q3 2 7 0l-1 5q-3 1-6 0z" fill="#8cc63e"/><path d="M6 14q3-2 6-1v5q-3-1-6 1z" fill="#35a7e8"/><path d="M13 13q3 1 6 0l-1 6q-3 1-5-1z" fill="#ffc924"/></svg></button>
        <button class="ie" aria-label="Internet Explorer"><svg viewBox="0 0 22 22"><path d="M17 14h3q-2 6-8 6-8-1-8-8 0-8 8-8 8 0 8 9H8q0 4 4 4 3 0 5-3zM8 10h8q-1-3-4-3t-4 3z" fill="#5dbcf2"/><path d="M3 20Q0 16 8 8t12-6q2 1 0 5M3 20q3 1 7-2" fill="none" stroke="#ffc91f" stroke-width="1.800"/></svg></button>
        <button class="app" aria-label="Explorer"><svg viewBox="0 0 22 22"><path d="M1 3h8l2 2h9v14H1z" fill="#f3d777"/><path d="M3 6h16v3H3z" fill="#fff7d0"/><path d="M1 9h20v10H1z" fill="#f7e08c"/><path d="M4 21v-5q0-2 2-2h10q2 0 2 2v5h-3v-4H7v4z" fill="#7fc4ea"/></svg></button>
        <button class="app" aria-label="Adobe Reader"><svg viewBox="0 0 22 22"><path d="M2 2h18v18H2z" fill="#b90f0f"/><path d="M5 16q5-3 6-11 1 7 6 8-7-1-12 3z" fill="none" stroke="#fff" stroke-width="1.300"/></svg></button>
        <button class="app" aria-label="Word"><svg viewBox="0 0 22 22"><path d="M2 2h17v18H2z" fill="#f4f8fd" stroke="#8aa8d4"/><path d="M3 6l3 10 4-8 3 8 4-10" fill="none" stroke="#1f5cb0" stroke-width="2.600"/><path d="M14 13h7v7h-7z" fill="#fff" stroke="#9ab4dc"/></svg></button>
        <button class="app on" aria-label="Mastercam"><svg viewBox="0 0 22 22"><path d="M3 1h5l10 19h-5z" fill="#222"/><path d="M18 1h3L7 20H2z" fill="#f4f4f4" stroke="#333"/><path d="M7 7l7 12" stroke="#111" stroke-width="3"/><path d="M14 8l4-2-1 5z" fill="#caa62e"/></svg></button>
        <button class="app" aria-label="Chat"><svg viewBox="0 0 22 22"><circle cx="15" cy="14" r="6.500" fill="#58b4ee"/><path d="M19 18l2 3-6-1z" fill="#58b4ee"/><ellipse cx="9" cy="8" rx="8" ry="6.500" fill="#ffc62e"/><path d="M4 12l0 5 5-3z" fill="#ffc62e"/><ellipse cx="8" cy="5" rx="5" ry="2.500" fill="#ffe68c"/></svg></button>
        <div class="tray">
          ${["kbd", "up", "chat", "flag", "plug", "bars", "sound"].map((n) => html`<tool-icon name=${n}></tool-icon>`)}
          <div class="clock">15:04<br />2011/11/12</div>
        </div>
        <button class="peek" aria-label="Desktop"></button>
      </div>

      <section class="dlg" role="dialog" aria-label="实体验证">
        <header><span>实体验证   www.SoQiu.com...</span><button class="x" aria-label="✕">✕</button></header>
        <div class="body">
          <div class="row btns">${["rewind", "play", "stop", "step", "fast"].map((n) => push(n))}</div>
          <div class="row mid">${["coil", "mill", "funnel"].map((n) => push(n))}</div>
          <fieldset class="disp">
            <legend>显示的控制</legend>
            <label class="row field">手动控制位移数:<input value="1" /></label>
            <label class="row field">屏幕刷新位移数:<input value="1" /></label>
            <div class="row speed"><span>速度</span><span class="ticks"><input type="range" aria-label="速度 品质" value="50" /></span><span>品质</span></div>
            <label class="chk"><input type="checkbox" checked />每个刀具路径后更新</label>
          </fieldset>
          <fieldset class="halt">
            <legend>停止控制</legend>
            <label class="chk"><input type="checkbox" />撞刀停止</label>
            <label class="chk"><input type="checkbox" />换刀停止</label>
            <label class="chk"><input type="checkbox" />完成每个操作后停止</label>
          </fieldset>
          <label class="chk detail"><input type="checkbox" />显示模拟过程的详细数据</label>
          <div class="row btns">${["folder", "cut", "chart", "lens", "disk"].map((n) => push(n))}</div>
          <div class="row btns walk">${push("walk")}<input type="range" aria-label="速度" value="100" />${push("run")}</div>
          <dl class="info"><dt>刀具路径:</dt><dd>封闭循环</dd><dt>刀具号码:</dt><dd>2</dd><dt>刀具名称:</dt><dd class="en">10. CENTER DRILL</dd></dl>
          <output class="pct">100%</output>
          <div class="row end">${push("ok")}${push("cancel")}${push("help")}</div>
        </div>
      </section>
    `;
  }
}
